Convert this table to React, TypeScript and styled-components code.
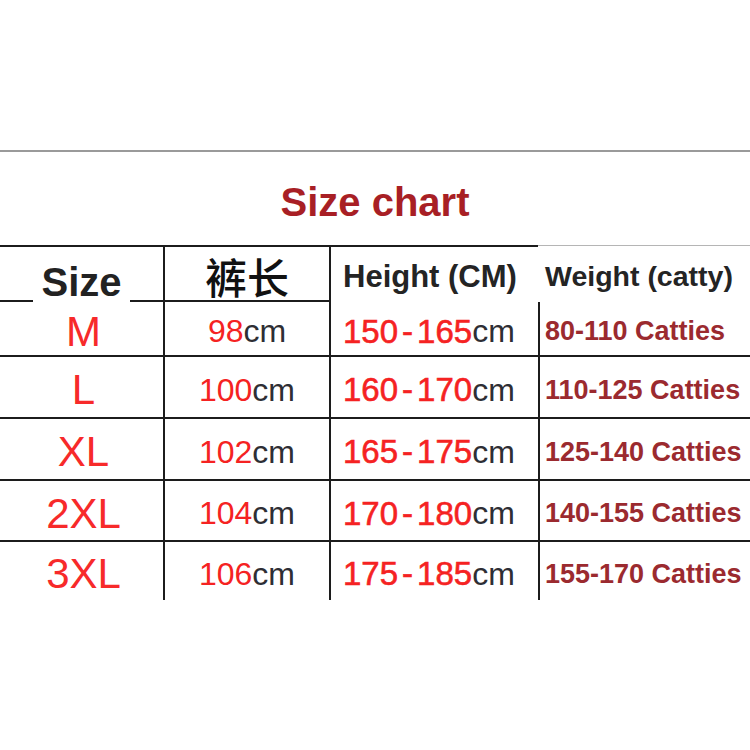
import React from 'react';
import styled, { createGlobalStyle } from 'styled-components';

const GlobalStyle = createGlobalStyle`
  * {
    margin: 0;
    padding: 0;
    box-sizing: border-box;
  }
  html, body {
    width: 100%;
    height: 100%;
    background-color: #ffffff;
  }
  body {
    font-family: "Liberation Sans", Arial, sans-serif;
  }
`;

const COLS = '163px 166px 209px 212px';
const LINE = '#1c1c1c';
const RED = '#f52222';
const WINE = '#9b2a2f';

const Page = styled.div`
  width: 750px;
  height: 750px;
  padding-top: 150px;
  background: #ffffff;
  overflow: hidden;
`;

const Sheet = styled.div`
  border-top: 2px solid #9a9a9a;
`;

const TitleBar = styled.div`
  height: 93px;
  display: flex;
  justify-content: center;
  align-items: center;
  padding-top: 8px;
`;

const Title = styled.h1`
  font-size: 40px;
  font-weight: 700;
  color: #a81f25;
`;

const Row = styled.div<{ $h: number; $ruled?: boolean }>`
  display: grid;
  grid-template-columns: ${COLS};
  height: ${p => p.$h}px;
  border-top: ${p => (p.$ruled ? `2px solid ${LINE}` : 'none')};
`;

// header cells
const HeadCell = styled.div<{ $light?: boolean; $divider?: boolean; $underline?: boolean; $left?: number }>`
  display: flex;
  align-items: center;
  justify-content: ${p => (p.$left !== undefined ? 'flex-start' : 'center')};
  padding-left: ${p => p.$left ?? 0}px;
  padding-top: 4px;
  border-top: ${p => (p.$light ? '1px solid #b5b5b5' : `2px solid ${LINE}`)};
  border-left: ${p => (p.$divider ? `2px solid ${LINE}` : 'none')};
  border-bottom: ${p => (p.$underline ? `2px solid ${LINE}` : 'none')};
`;

const SizeHead = styled.div`
  display: flex;
  align-items: flex-end;
  border-top: 2px solid ${LINE};
`;

const Rule = styled.span`
  flex: 1;
  height: 2px;
  background: ${LINE};
`;

const SizeLabel = styled.span`
  font-size: 40px;
  font-weight: 700;
  line-height: 1;
  color: #222222;
  padding: 0 8px;
`;

const CjkLabel = styled.span`
  font-family: "Noto Sans CJK SC", sans-serif;
  font-size: 42px;
  font-weight: 500;
  color: #111111;
  line-height: 1;
`;

const HeadLabel = styled.span<{ $size: number }>`
  font-size: ${p => p.$size}px;
  font-weight: 700;
  color: #242424;
  white-space: nowrap;
`;

// body cells
const Cell = styled.div<{ $divider?: boolean; $left?: number }>`
  display: flex;
  align-items: center;
  justify-content: ${p => (p.$left !== undefined ? 'flex-start' : 'center')};
  padding-left: ${p => p.$left ?? 0}px;
  padding-top: 6px;
  border-left: ${p => (p.$divider ? `2px solid ${LINE}` : 'none')};
  white-space: nowrap;
`;

const SizeText = styled.span`
  font-size: 42px;
  color: #f72a2a;
  line-height: 1;
  padding-left: 4px;
`;

const Num = styled.span<{ $heavy?: boolean }>`
  font-size: ${p => (p.$heavy ? 33 : 32)}px;
  color: ${RED};
  -webkit-text-stroke: ${p => (p.$heavy ? `0.6px ${RED}` : '0')};
`;

const Hyphen = styled.span`
  margin: 0 4px;
`;

const Unit = styled.span`
  font-size: 32px;
  color: #2e2e34;
`;

const Weight = styled.span`
  font-size: 27px;
  font-weight: 700;
  color: ${WINE};
`;

const rows = [
  { size: 'M', len: '98', h: ['150', '165'], w: '80-110', height: 53 },
  { size: 'L', len: '100', h: ['160', '170'], w: '110-125', height: 62 },
  { size: 'XL', len: '102', h: ['165', '175'], w: '125-140', height: 62 },
  { size: '2XL', len: '104', h: ['170', '180'], w: '140-155', height: 61 },
  { size: '3XL', len: '106', h: ['175', '185'], w: '155-170', height: 60 },
];

function App() {
  return (
    <>
      <GlobalStyle />
      <Page>
        <Sheet>
          <TitleBar>
            <Title>Size chart</Title>
          </TitleBar>

          <Row $h={57}>
            <SizeHead>
              <Rule />
              <SizeLabel>Size</SizeLabel>
              <Rule />
            </SizeHead>
            <HeadCell $divider $underline>
              <CjkLabel>裤长</CjkLabel>
            </HeadCell>
            <HeadCell $divider $left={12}>
              <HeadLabel $size={31}>Height (CM)</HeadLabel>
            </HeadCell>
            <HeadCell $light $left={7}>
              <HeadLabel $size={28.5}>Weight (catty)</HeadLabel>
            </HeadCell>
          </Row>

          {rows.map((r, i) => (
            <Row key={r.size} $h={r.height} $ruled={i > 0}>
              <Cell>
                <SizeText>{r.size}</SizeText>
              </Cell>
              <Cell $divider>
                <Num>{r.len}</Num>
                <Unit>cm</Unit>
              </Cell>
              <Cell $divider $left={12}>
                <Num $heavy>
                  {r.h[0]}
                  <Hyphen>-</Hyphen>
                  {r.h[1]}
                </Num>
                <Unit>cm</Unit>
              </Cell>
              <Cell $divider $left={5}>
                <Weight>{r.w} Catties</Weight>
              </Cell>
            </Row>
          ))}
        </Sheet>
      </Page>
    </>
  );
}

export default App;
